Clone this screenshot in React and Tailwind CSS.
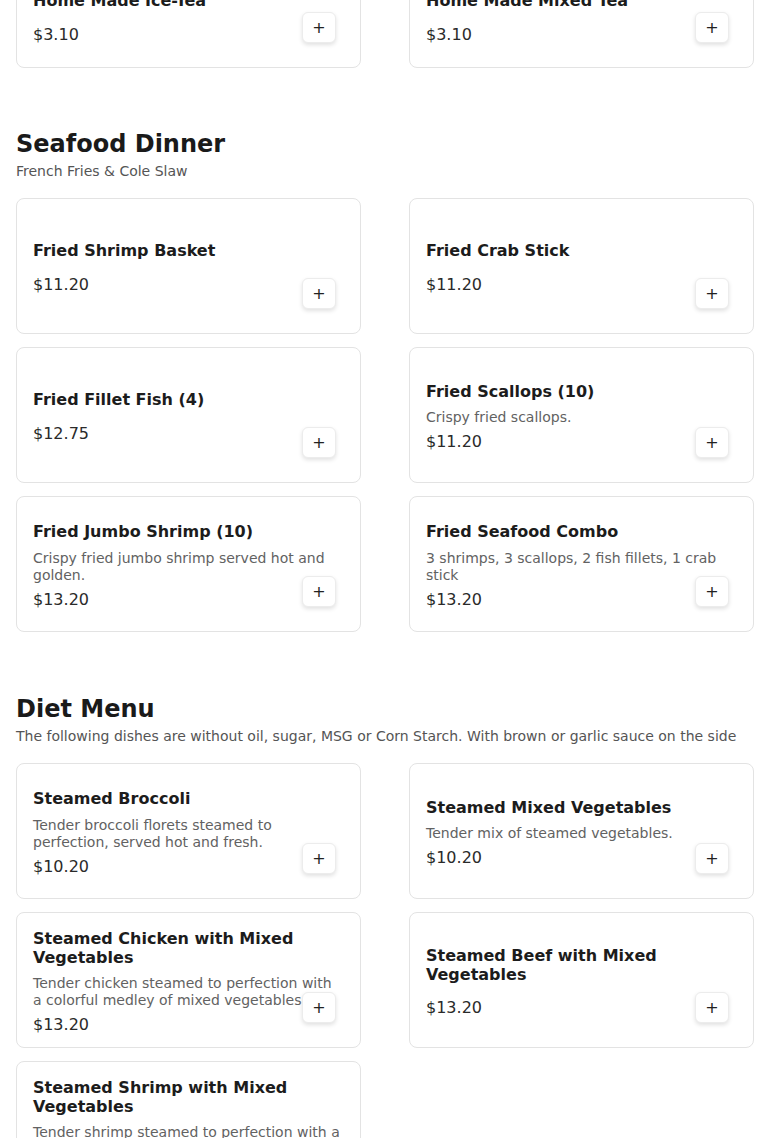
import React from 'react';

const font = { fontFamily: '"DejaVu Sans", Verdana, sans-serif' };

const sections = [
  {
    id: 'drinks',
    cardHeight: 'h-[104px]',
    items: [
      { name: 'Home Made Ice-Tea', price: '3.10' },
      { name: 'Home Made Mixed Tea', price: '3.10' },
    ],
  },
  {
    id: 'seafood',
    title: 'Seafood Dinner',
    subtitle: 'French Fries & Cole Slaw',
    cardHeight: 'h-[136px]',
    items: [
      { name: 'Fried Shrimp Basket', price: '11.20' },
      { name: 'Fried Crab Stick', price: '11.20' },
      { name: 'Fried Fillet Fish (4)', price: '12.75' },
      { name: 'Fried Scallops (10)', desc: 'Crispy fried scallops.', price: '11.20' },
      { name: 'Fried Jumbo Shrimp (10)', desc: 'Crispy fried jumbo shrimp served hot and golden.', price: '13.20' },
      { name: 'Fried Seafood Combo', desc: '3 shrimps, 3 scallops, 2 fish fillets, 1 crab stick', price: '13.20' },
    ],
  },
  {
    id: 'diet',
    title: 'Diet Menu',
    subtitle: 'The following dishes are without oil, sugar, MSG or Corn Starch. With brown or garlic sauce on the side',
    cardHeight: 'h-[136px]',
    items: [
      { name: 'Steamed Broccoli', desc: 'Tender broccoli florets steamed to perfection, served hot and fresh.', price: '10.20' },
      { name: 'Steamed Mixed Vegetables', desc: 'Tender mix of steamed vegetables.', price: '10.20' },
      { name: 'Steamed Chicken with Mixed Vegetables', desc: 'Tender chicken steamed to perfection with a colorful medley of mixed vegetables', price: '13.20' },
      { name: 'Steamed Beef with Mixed Vegetables', price: '13.20' },
      { name: 'Steamed Shrimp with Mixed Vegetables', desc: 'Tender shrimp steamed to perfection with a colorful medley of mixed vegetables', price: '13.20' },
    ],
  },
];

function MenuCard({ item, height }) {
  return (
    <div className={`relative ${height} flex flex-col justify-center px-4 pt-1.5 bg-white border border-[#e3e3e3] rounded-lg`}>
      <h3 className="text-base leading-[1.2] font-bold text-[#1c1c1c] mb-2">{item.name}</h3>
      <p className="text-sm leading-[17px] text-[#626262] mb-1">{item.desc}</p>
      <div className="text-base leading-6 text-[#2a2a2a]">${item.price}</div>
      <button className="absolute right-6 bottom-6 w-[34px] h-[31px] flex items-center justify-center bg-white border border-[#ececec] rounded-md shadow-[0_2px_4px_rgba(0,0,0,0.12)] text-[#222] text-base leading-none">
        +
      </button>
    </div>
  );
}

export default function App() {
  return (
    <div className="bg-white min-h-screen overflow-hidden" style={font}>
      <div className="px-4 -mt-[36px]">
        {sections.map((s, i) => (
          <section key={s.id} className={i === 1 ? 'mt-[60px]' : i === 2 ? 'mt-[61px]' : ''}>
            {s.title && (
              <div className="mb-[17px]">
                <h2 className="text-2xl leading-8 font-bold text-[#1a1a1a]">{s.title}</h2>
                <p className="mt-[1px] text-sm leading-5 text-[#555]">{s.subtitle}</p>
              </div>
            )}
            <div className="grid grid-cols-2 gap-x-12 gap-y-[13px]">
              {s.items.map((item) => (
                <MenuCard key={item.name} item={item} height={s.cardHeight} />
              ))}
            </div>
          </section>
        ))}
      </div>
    </div>
  );
}
